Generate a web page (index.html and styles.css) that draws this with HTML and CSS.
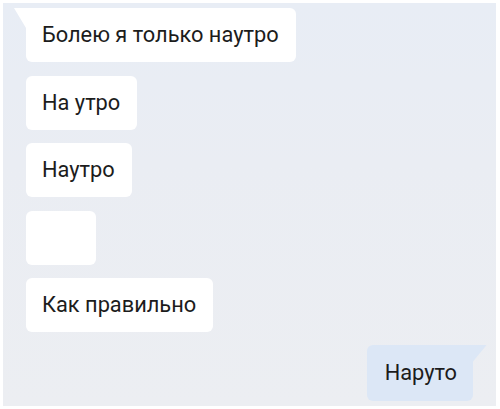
FILE: index.html
```html
<!DOCTYPE html>
<html lang="ru">
<head>
    <meta charset="UTF-8" />
    <meta name="viewport" content="width=device-width, initial-scale=1.0" />
    <title>Чат</title>
    <link rel="stylesheet" href="styles.css">
</head>
<body>
    <div class="chat">
        <div class="message in first">Болею я только наутро</div>
        <div class="message in">На утро</div>
        <div class="message in">Наутро</div>
        <div class="message in empty"></div>
        <div class="message in">Как правильно</div>
        <div class="message out">Наруто</div>
    </div>
</body>
</html>
```

FILE: styles.css
```css
body {
    margin: 0;
    background-color: #fff;
    font-family: Roboto, 'Noto Sans', sans-serif;
}

.chat {
    margin: 3px 4px 3px 3px;
    height: 403px;
    box-sizing: border-box;
    padding: 5px 0 0 23px;
    display: flex;
    flex-direction: column;
    align-items: flex-start;
    gap: 13.5px;
    background: linear-gradient(180deg, #e8edf5 0%, #eaedf3 40%, #eceef2 100%);
}

.message {
    position: relative;
    background-color: #fff;
    color: #1c1c1c;
    font-size: 21.8px;
    line-height: 54px;
    height: 54px;
    padding: 0 17px 0 16px;
    border-radius: 6px;
    box-sizing: border-box;
}

.message.first {
    border-top-left-radius: 0;
}

.message.first::before {
    content: '';
    position: absolute;
    left: -12px;
    top: 0;
    width: 12px;
    height: 20px;
    background-color: #fff;
    clip-path: polygon(0 0, 100% 0, 100% 100%);
}

.message.empty {
    width: 70px;
}

.message.out {
    align-self: flex-end;
    margin-right: 23px;
    margin-top: -1px;
    height: 56px;
    line-height: 56px;
    padding: 0 16px 0 18px;
    background-color: #dce7f6;
    border-top-right-radius: 0;
}

.message.out::after {
    content: '';
    position: absolute;
    right: -14px;
    top: 0;
    width: 14px;
    height: 17px;
    background-color: #dce7f6;
    clip-path: polygon(0 0, 100% 0, 0 100%);
}
```
